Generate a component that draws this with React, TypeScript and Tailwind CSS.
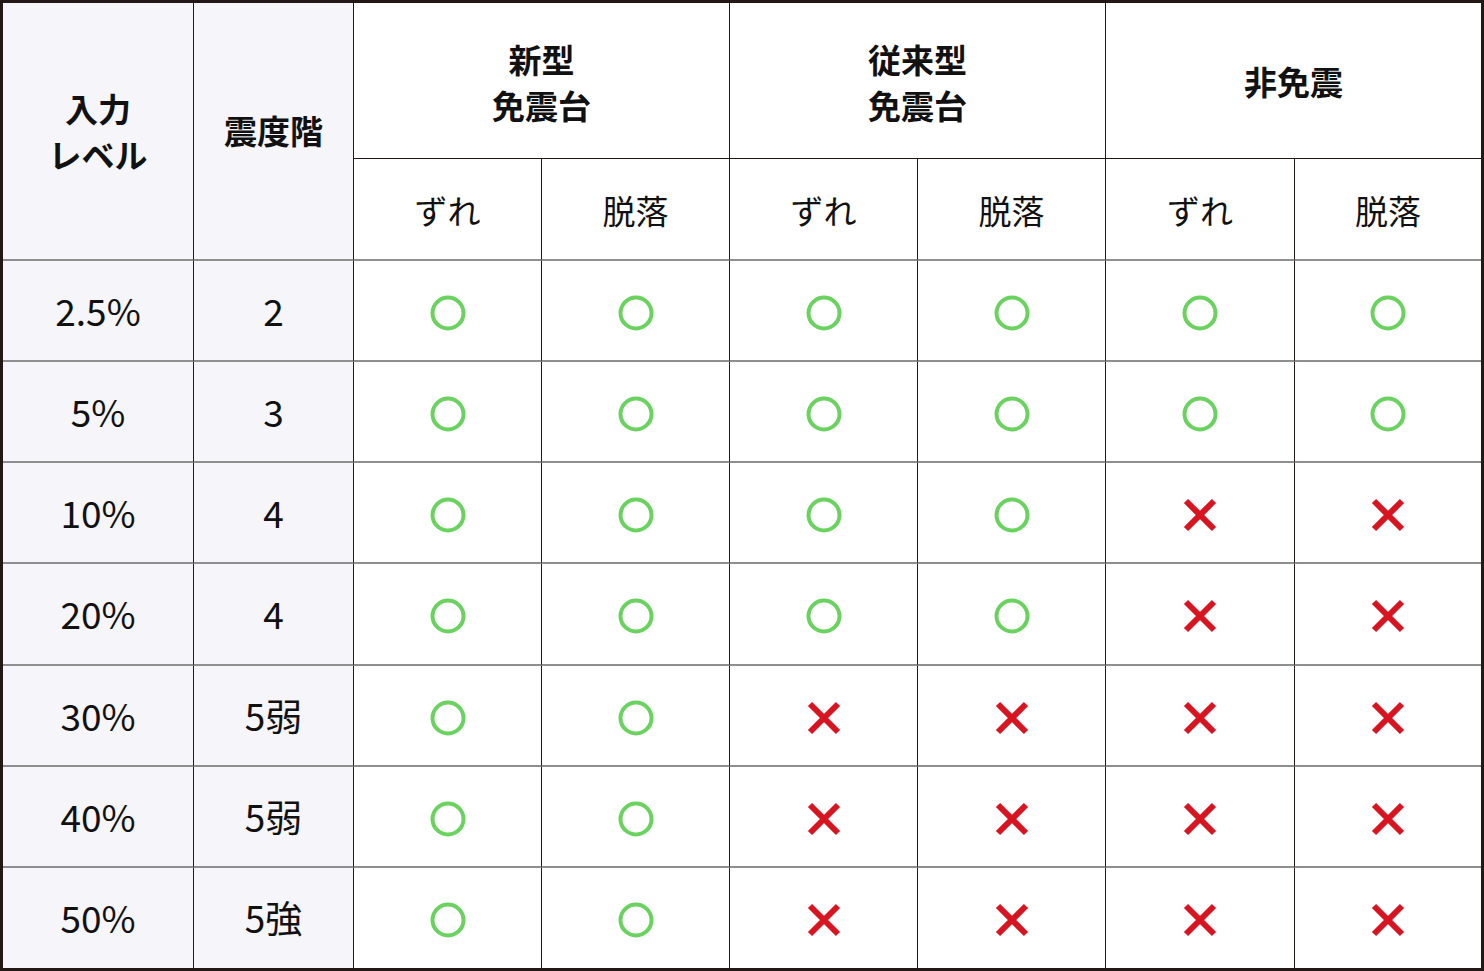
import React from "react";

type Mark = "o" | "x";

interface Row {
  level: string;
  shindo: string;
  marks: Mark[];
}

const rows: Row[] = [
  { level: "2.5%", shindo: "2", marks: ["o", "o", "o", "o", "o", "o"] },
  { level: "5%", shindo: "3", marks: ["o", "o", "o", "o", "o", "o"] },
  { level: "10%", shindo: "4", marks: ["o", "o", "o", "o", "x", "x"] },
  { level: "20%", shindo: "4", marks: ["o", "o", "o", "o", "x", "x"] },
  { level: "30%", shindo: "5弱", marks: ["o", "o", "x", "x", "x", "x"] },
  { level: "40%", shindo: "5弱", marks: ["o", "o", "x", "x", "x", "x"] },
  { level: "50%", shindo: "5強", marks: ["o", "o", "x", "x", "x", "x"] },
];

function Circle() {
  return (
    <svg width="36" height="36" viewBox="0 0 36 36">
      <circle cx="18" cy="18" r="15.5" fill="none" stroke="#6ad25f" strokeWidth="4" />
    </svg>
  );
}

function Cross() {
  return (
    <svg width="34" height="34" viewBox="0 0 34 34">
      <path d="M3 3 L31 31 M31 3 L3 31" stroke="#d7141f" strokeWidth="6" strokeLinecap="butt" />
    </svg>
  );
}

const line = "border-[#231815]";
const gray = "border-b-2 border-b-[#8e8e8e]";

export default function App() {
  return (
    <div
      className="w-[1484px] h-[971px] bg-white border-[3px] border-[#231815] text-[#111]"
      style={{ fontFamily: '"Noto Sans CJK JP", "Noto Sans", sans-serif' }}
    >
      <div className="grid grid-cols-[191px_160px_188px_188px_188px_188px_189px_186px] grid-rows-[156px_102px_101px_101px_101px_102px_101px_101px_100px]">
        {/* header */}
        <div className={`row-span-2 bg-[#f5f5fa] border-r ${line} ${gray} flex items-center justify-center text-center font-bold text-[33px] leading-[46px]`}>
          入力
          <br />
          レベル
        </div>
        <div className={`row-span-2 bg-[#f5f5fa] border-r ${line} ${gray} flex items-center justify-center font-bold text-[33px]`}>
          震度階
        </div>
        <div className={`col-span-2 border-r border-b ${line} flex items-center justify-center text-center font-bold text-[33px] leading-[46px] pt-[2px]`}>
          新型
          <br />
          免震台
        </div>
        <div className={`col-span-2 border-r border-b ${line} flex items-center justify-center text-center font-bold text-[33px] leading-[46px] pt-[2px]`}>
          従来型
          <br />
          免震台
        </div>
        <div className={`col-span-2 border-b ${line} flex items-center justify-center font-bold text-[33px] pt-[2px]`}>
          非免震
        </div>
        {["ずれ", "脱落", "ずれ", "脱落", "ずれ", "脱落"].map((t, i) => (
          <div
            key={i}
            className={`${i < 5 ? "border-r" : ""} ${line} ${gray} flex items-center justify-center text-[33px] pt-[3px]`}
          >
            {t}
          </div>
        ))}

        {rows.map((r, ri) => {
          const b = ri < rows.length - 1 ? gray : "";
          return (
            <React.Fragment key={ri}>
              <div className={`bg-[#f5f5fa] border-r ${line} ${b} flex items-center justify-center text-[37px]`}>
                {r.level}
              </div>
              <div className={`bg-[#f5f5fa] border-r ${line} ${b} flex items-center justify-center text-[37px]`}>
                {r.shindo}
              </div>
              {r.marks.map((m, mi) => (
                <div
                  key={mi}
                  className={`${mi < 5 ? "border-r" : ""} ${line} ${b} flex items-center justify-center pt-[4px]`}
                >
                  {m === "o" ? <Circle /> : <Cross />}
                </div>
              ))}
            </React.Fragment>
          );
        })}
      </div>
    </div>
  );
}
